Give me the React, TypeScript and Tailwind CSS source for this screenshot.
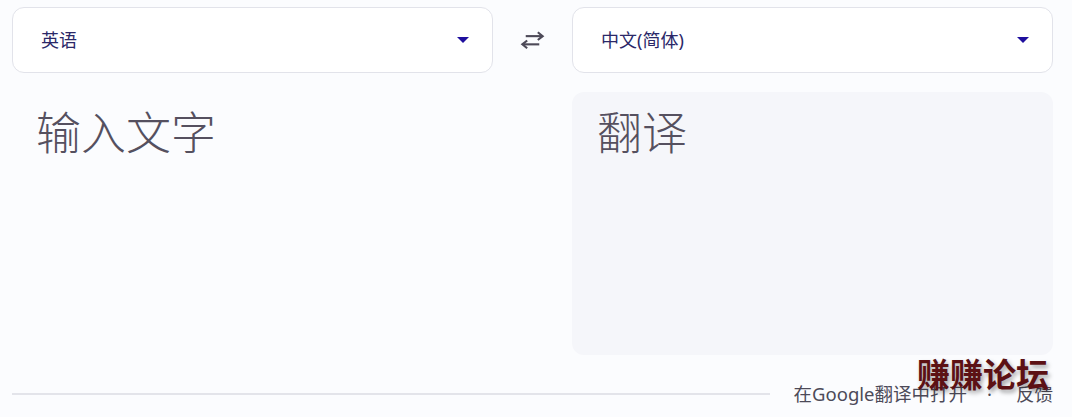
import React from "react";

const font = '"Noto Sans", "Noto Sans CJK SC", sans-serif';

function Caret() {
  return (
    <svg width="14" height="8" viewBox="0 0 14 8" className="shrink-0">
      <path d="M1 1 L13 1 L7 7 Z" fill="#1f0f9e" />
    </svg>
  );
}

function SwapIcon() {
  return (
    <svg width="29" height="22" viewBox="0 0 30 22" className="shrink-0">
      <path d="M8 7 H25" stroke="#4d4a58" strokeWidth="2.2" fill="none" />
      <path d="M20.5 3 L25.5 7 L20.5 11" stroke="#4d4a58" strokeWidth="2.2" fill="none" />
      <path d="M22 15.5 H5" stroke="#4d4a58" strokeWidth="2.2" fill="none" />
      <path d="M9.5 11.5 L4.5 15.5 L9.5 19.5" stroke="#4d4a58" strokeWidth="2.2" fill="none" />
    </svg>
  );
}

function Select({ label }: { label: string }) {
  return (
    <div className="flex h-[66px] w-[481px] items-center justify-between rounded-[12px] border border-[#e2e3ea] bg-white pl-[28px] pr-[22px]">
      <span className="text-[18px] text-[#2b2868]">{label}</span>
      <Caret />
    </div>
  );
}

export default function App() {
  return (
    <div
      className="relative h-[417px] w-[1072px] overflow-hidden bg-[#fbfcfe]"
      style={{ fontFamily: font }}
    >
      <div className="flex items-center gap-[25px] pl-[12px] pt-[7px]">
        <Select label="英语" />
        <SwapIcon />
        <Select label="中文(简体)" />
      </div>
      <div className="mt-[19px] flex gap-[79px] pl-[12px]">
        <div className="h-[263px] w-[481px] pl-[24px] pt-[10px]">
          <span className="text-[45px] font-light leading-[62px] text-[#55505f]">输入文字</span>
        </div>
        <div className="h-[263px] w-[481px] rounded-[12px] bg-[#f5f6fa] pl-[25px] pt-[10px]">
          <span className="text-[45px] font-light leading-[62px] text-[#55505f]">翻译</span>
        </div>
      </div>
      <div className="mt-[25px] flex items-center pl-[12px] pr-[19px]">
        <div className="h-[2px] w-[758px] bg-[#e3e4ea]" />
        <div className="ml-auto flex items-center text-[18.5px] text-[#4c4a58]">
          <span>在Google翻译中打开</span>
          <span className="ml-[20px] mr-[24px] text-[#4c4a58]">·</span>
          <span>反馈</span>
        </div>
      </div>
      <div
        className="absolute left-[917px] top-[355px] text-[33px] font-bold leading-[40px] text-[#5c1114]"
        style={{ textShadow: "2px 3px 4px rgba(0,0,0,0.35)" }}
      >
        赚赚论坛
      </div>
    </div>
  );
}
